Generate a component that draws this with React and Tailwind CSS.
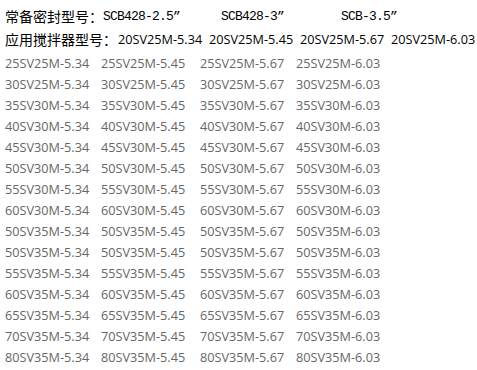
const rows = [
  ["25SV25M", "25SV25M", "25SV25M", "25SV25M"],
  ["30SV25M", "30SV25M", "30SV25M", "30SV25M"],
  ["35SV30M", "35SV30M", "35SV30M", "35SV30M"],
  ["40SV30M", "40SV30M", "40SV30M", "40SV30M"],
  ["45SV30M", "45SV30M", "45SV30M", "45SV30M"],
  ["50SV30M", "50SV30M", "50SV30M", "50SV30M"],
  ["55SV30M", "55SV30M", "55SV30M", "55SV30M"],
  ["60SV30M", "60SV30M", "60SV30M", "60SV30M"],
  ["50SV35M", "50SV35M", "50SV35M", "50SV35M"],
  ["50SV35M", "50SV35M", "50SV35M", "50SV35M"],
  ["55SV35M", "55SV35M", "55SV35M", "55SV35M"],
  ["60SV35M", "60SV35M", "60SV35M", "60SV35M"],
  ["65SV35M", "65SV35M", "65SV35M", "65SV35M"],
  ["70SV35M", "70SV35M", "70SV35M", "70SV35M"],
  ["80SV35M", "80SV35M", "80SV35M", "80SV35M"],
];

const sizes = ["5.34", "5.45", "5.67", "6.03"];

const cjk = "font-['Noto_Sans_CJK_SC',sans-serif] shrink-0";
const mono = "font-['Liberation_Mono','Noto_Sans_CJK_SC',monospace] shrink-0 tracking-[-0.8px]";
const sans = "font-['Open_Sans','Noto_Sans_CJK_SC',sans-serif]";

export default function App() {
  return (
    <div className="h-[370px] w-[477px] overflow-hidden whitespace-nowrap bg-white pl-[5px] pt-[5px]">
      <div className="flex h-[23px] items-center text-[14px] text-black">
        <span className={cjk}>常备密封型号：</span>
        <span className={`${mono} w-[118px] text-[13px]`}>SCB428-2.5”</span>
        <span className={`${mono} w-[120px] text-[13px]`}>SCB428-3”</span>
        <span className={`${mono} text-[13px]`}>SCB-3.5”</span>
      </div>
      <div className="flex h-[23px] items-center text-[14px] text-black">
        <span className={cjk}>应用搅拌器型号：</span>
        <span className={`${sans} ml-[1px] flex shrink-0 text-[12.7px]`}>
          {sizes.map((s) => (
            <span key={s} className="w-[91px]">20SV25M-{s}</span>
          ))}
        </span>
      </div>
      <div className={`${sans} mt-[2px] text-[12.7px] text-[#666]`}>
        {rows.map((r, i) => (
          <div key={i} className="grid h-[21px] grid-cols-[96px_99px_96px_auto] items-center">
            {r.map((m, j) => (
              <span key={j}>{m}-{sizes[j]}</span>
            ))}
          </div>
        ))}
      </div>
    </div>
  );
}
